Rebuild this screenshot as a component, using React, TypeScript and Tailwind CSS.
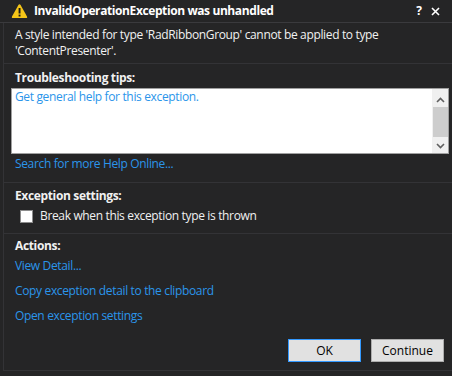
import React from 'react';

const font = { fontFamily: '"Open Sans", "Noto Sans", sans-serif' };

const WarningIcon = () => (
  <svg width="17" height="16" viewBox="0 0 17 16" className="shrink-0">
    <path d="M8.5 1.2 C9 1.2 9.3 1.5 9.6 2 L16 13.4 C16.5 14.3 16 15 15 15 L2 15 C1 15 0.5 14.3 1 13.4 L7.4 2 C7.7 1.5 8 1.2 8.5 1.2 Z" fill="#f5c518" />
    <rect x="7.6" y="5" width="1.9" height="5.5" fill="#1b1b1b" />
    <rect x="7.6" y="11.6" width="1.9" height="1.9" fill="#1b1b1b" />
  </svg>
);

const Link = ({ children }: { children: React.ReactNode }) => (
  <div className="text-[12px] leading-[16px] tracking-[-0.35px] text-[#2b95ea] cursor-pointer">{children}</div>
);

const Heading = ({ children }: { children: React.ReactNode }) => (
  <div className="text-[12px] leading-[16px] tracking-[-0.35px] font-bold text-[#f1f1f1]">{children}</div>
);

export default function App() {
  return (
    <div className="w-[452px] h-[376px] bg-[#252526] overflow-hidden flex flex-col" style={font}>
      {/* title bar */}
      <div className="h-[23px] shrink-0 flex items-center border-b border-[#3a3a3d] pl-[11px] pr-[12px]">
        <WarningIcon />
        <div className="ml-[6px] text-[12px] font-bold text-white tracking-[-0.4px]">InvalidOperationException was unhandled</div>
        <div className="ml-auto flex items-center gap-[9px] text-white">
          <span className="text-[12px] font-bold">?</span>
          <svg width="9" height="9" viewBox="0 0 9 9">
            <path d="M1 1 L8 8 M8 1 L1 8" stroke="#ffffff" strokeWidth="1.6" />
          </svg>
        </div>
      </div>

      {/* body */}
      <div className="flex-1 ml-[3px] mb-[5px] border-l border-b border-[#333336] flex flex-col">
        <div className="pl-[11px] pt-[4px] pr-[8px] text-[12px] leading-[16px] tracking-[-0.35px] text-[#f1f1f1] h-[40px]">
          A style intended for type 'RadRibbonGroup' cannot be applied to type 'ContentPresenter'.
        </div>
        <div className="border-t border-[#333336]" />

        <div className="pl-[11px] pr-[3px] pt-[6px]">
          <Heading>Troubleshooting tips:</Heading>
          <div className="mt-[2px] -ml-[4px] h-[66px] border border-[#a0a0a0] bg-white flex">
            <div className="flex-1 pl-[3px]">
              <Link>Get general help for this exception.</Link>
            </div>
            <div className="w-[16px] bg-[#f0f0f0] flex flex-col items-center">
              <svg width="9" height="6" viewBox="0 0 9 6" className="mt-[8px]">
                <path d="M1 5 L4.5 1.5 L8 5" stroke="#606060" strokeWidth="1.6" fill="none" />
              </svg>
              <div className="mt-[4px] w-[15px] h-[30px] bg-[#cdcdcd]" />
              <svg width="9" height="6" viewBox="0 0 9 6" className="mt-[6px]">
                <path d="M1 1 L4.5 4.5 L8 1" stroke="#606060" strokeWidth="1.6" fill="none" />
              </svg>
            </div>
          </div>
          <div className="mt-[2px]">
            <Link>Search for more Help Online...</Link>
          </div>
        </div>

        <div className="mt-[10px] border-t border-[#333336]" />
        <div className="pl-[11px] pt-[5px]">
          <Heading>Exception settings:</Heading>
          <div className="mt-[4px] flex items-center h-[16px] pl-[5px]">
            <div className="w-[13px] h-[13px] bg-white border border-[#8c8c8c]" />
            <span className="ml-[7px] text-[12px] leading-[16px] tracking-[-0.35px] text-[#f1f1f1]">Break when this exception type is thrown</span>
          </div>
        </div>

        <div className="mt-[9px] border-t border-[#333336]" />
        <div className="pl-[11px] pt-[4px] flex flex-col">
          <Heading>Actions:</Heading>
          <div className="mt-[4px] flex flex-col gap-[9px]">
            <Link>View Detail...</Link>
            <Link>Copy exception detail to the clipboard</Link>
            <Link>Open exception settings</Link>
          </div>
        </div>

        <div className="mt-auto mb-[8px] flex justify-end gap-[10px] pr-[8px]">
          <button className="w-[73px] h-[23px] bg-[#e1e1e1] border border-[#3399ff] text-[12px] text-black">OK</button>
          <button className="w-[73px] h-[23px] bg-[#e1e1e1] border border-[#adadad] text-[12px] text-black">Continue</button>
        </div>
      </div>
    </div>
  );
}
